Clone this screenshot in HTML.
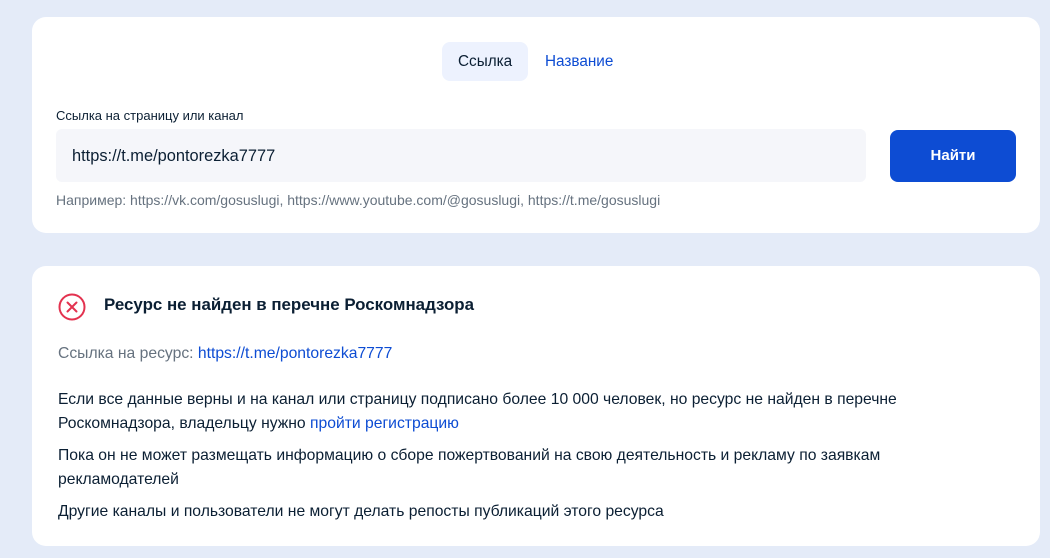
<!DOCTYPE html>
<html><head><meta charset="utf-8"><style>
body{margin:0;width:1050px;height:558px;background:#e4ebf8;font-family:"Liberation Sans",sans-serif;color:#0b1f33;position:relative;overflow:hidden}
.card{position:absolute;left:32px;width:1008px;background:#fff;border-radius:14px}
.a{position:absolute;white-space:nowrap}
</style></head><body>
<div class="card" style="top:17px;height:216px">
  <div class="a" style="left:410px;top:25px;width:86px;height:39px;background:#edf2fe;border-radius:8px"></div>
  <div class="a" style="left:426px;top:36px;font-size:15.3px">Ссылка</div>
  <div class="a" style="left:513px;top:36px;font-size:15.3px;color:#0d4cd3">Название</div>
  <div class="a" style="left:24px;top:91px;font-size:13px">Ссылка на страницу или канал</div>
  <div class="a" style="left:24px;top:112px;width:810px;height:53px;background:#f5f6fa;border-radius:6px"></div>
  <div class="a" style="left:40px;top:130px;font-size:16.4px">https://t.me/pontorezka7777</div>
  <div class="a" style="left:858px;top:113px;width:126px;height:52px;background:#0d4cd3;border-radius:8px;color:#fff;font-size:15px;font-weight:bold;text-align:center;line-height:52px">Найти</div>
  <div class="a" style="left:24px;top:175px;font-size:14px;color:#66727f">Например: https://vk.com/gosuslugi, https://www.youtube.com/@gosuslugi, https://t.me/gosuslugi</div>
</div>
<div class="card" style="top:266px;height:280px">
  <svg class="a" style="left:25px;top:26px" width="30" height="30" viewBox="0 0 30 30"><circle cx="15" cy="15" r="12.5" fill="none" stroke="#e3324f" stroke-width="2"/><path d="M10.5 10.5L19.5 19.5M19.5 10.5L10.5 19.5" stroke="#e3324f" stroke-width="2" stroke-linecap="round"/></svg>
  <div class="a" style="left:72px;top:29px;font-size:16.9px;font-weight:bold">Ресурс не найден в перечне Роскомнадзора</div>
  <div class="a" style="left:26px;top:79px;font-size:15.7px;color:#66727f">Ссылка на ресурс: <span style="color:#0d4cd3">https://t.me/pontorezka7777</span></div>
  <div class="a" style="left:26px;top:122px;font-size:15.7px;line-height:24px">Если все данные верны и на канал или страницу подписано более 10 000 человек, но ресурс не найден в перечне<br>Роскомнадзора, владельцу нужно <span style="color:#0d4cd3">пройти регистрацию</span></div>
  <div class="a" style="left:26px;top:178px;font-size:15.7px;line-height:24px">Пока он не может размещать информацию о сборе пожертвований на свою деятельность и рекламу по заявкам<br>рекламодателей</div>
  <div class="a" style="left:26px;top:234px;font-size:15.7px;line-height:24px">Другие каналы и пользователи не могут делать репосты публикаций этого ресурса</div>
</div>
</body></html>
